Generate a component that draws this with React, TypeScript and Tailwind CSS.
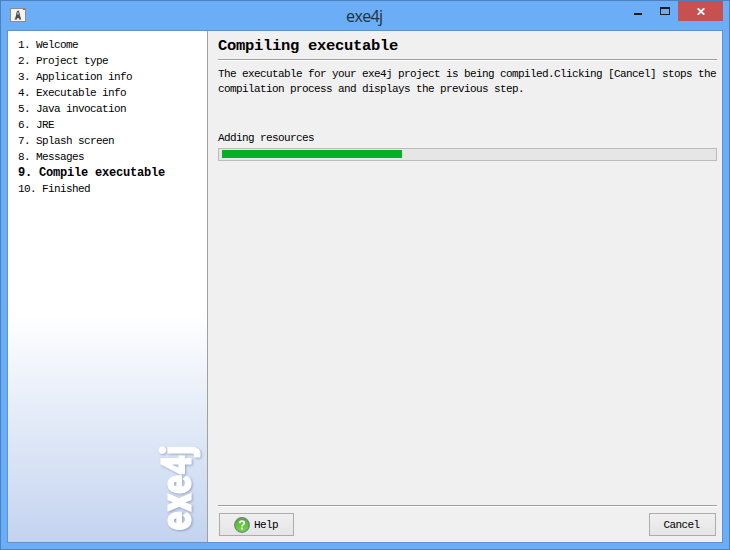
const steps = [
  'Welcome',
  'Project type',
  'Application info',
  'Executable info',
  'Java invocation',
  'JRE',
  'Splash screen',
  'Messages',
  'Compile executable',
  'Finished',
];

const ACTIVE = 8;

function AppIcon() {
  return (
    <svg width="16" height="14" viewBox="0 0 16 14" shapeRendering="crispEdges">
      <rect x="0.5" y="0.5" width="15" height="13" fill="#f4f4f4" stroke="#8b8b8b" />
      <rect x="13" y="1" width="2" height="1" fill="#d0553f" />
      <g shapeRendering="auto">
        <path d="M8 2.2c1.500 1 1.800 3 1.900 5l1.400 4.300H9L8.700 10H7.300L7 11.500H4.700L6.100 7.200c.1-2 .4-4 1.900-5z" fill="#4a4f55" />
        <rect x="7.200" y="4.500" width="1.600" height="2" fill="#b9c6cf" />
        <rect x="4.700" y="10.300" width="1.500" height="1.200" fill="#a4604f" />
      </g>
    </svg>
  );
}

function TitleBar() {
  return (
    <header className="flex h-[29px] shrink-0 justify-between">
      <div className="w-[128px] pt-[7px] pl-[9px]">
        <AppIcon />
      </div>
      <div className="flex-1 pt-[3px] pl-[217px] font-['Open_Sans','Noto_Sans',sans-serif] text-[16px] leading-[24px] text-[#24303d]">
        exe4j
      </div>
      <div className="flex">
        <svg width="52" height="20" viewBox="0 0 52 20" shapeRendering="crispEdges">
          <rect x="8" y="12" width="8" height="2" fill="#1e1e1e" />
          <path d="M34 6h10v8H34z M35 8v5h8V8z" fill="#1e1e1e" fillRule="evenodd" />
        </svg>
        <div className="flex h-5 w-[45px] items-center justify-center bg-[#c75050]">
          <svg width="8" height="7" viewBox="0 0 8 7">
            <path d="M0.700 0.300L7.300 6.700M7.300 0.300L0.700 6.700" stroke="#fff" strokeWidth="1.800" />
          </svg>
        </div>
        <div className="w-[6px]" />
      </div>
    </header>
  );
}

function Logo() {
  return (
    <svg width="60" height="100" viewBox="0 0 60 100" className="mt-auto ml-auto shrink-0 overflow-visible drop-shadow-[1px_1px_1px_rgba(90,110,150,0.5)]">
      <text
        transform="translate(44 88.500) rotate(-90)"
        textLength="85"
        lengthAdjust="spacingAndGlyphs"
        fill="#fff"
        stroke="#fff"
        strokeWidth="1.100"
        className="font-['Roboto',sans-serif] text-[42px] font-black tracking-normal"
      >
        exe4j
      </text>
    </svg>
  );
}

function Sidebar() {
  return (
    <aside className="flex w-[200px] shrink-0 flex-col border-r border-[#a0a0a0] bg-[linear-gradient(to_bottom,#fff_0,#fff_282px,#c3d3ef_512px)] pt-[6px]">
      <ol className="pl-[10px]">
        {steps.map((step, i) => (
          <li
            key={step}
            className={
              i === ACTIVE
                ? 'h-4 text-[12px] leading-4 font-bold tracking-[-0.2px] whitespace-pre'
                : 'h-4 leading-4 whitespace-pre'
            }
          >
            {i + 1}. {step}
          </li>
        ))}
      </ol>
      <Logo />
    </aside>
  );
}

function Rule() {
  return <div className="h-[2px] shrink-0 border-b border-white bg-[#a0a0a0]" />;
}

function HelpIcon() {
  return (
    <svg width="16" height="16" viewBox="0 0 16 16">
      <defs>
        <linearGradient id="help" x1="0" y1="0" x2="0" y2="1">
          <stop offset="0" stopColor="#4fae35" />
          <stop offset="1" stopColor="#6fdc44" />
        </linearGradient>
      </defs>
      <circle cx="8" cy="8" r="7.300" fill="url(#help)" stroke="#72808a" strokeWidth="1.300" />
      <path d="M5.800 6.200C5.800 3.500 10.300 3.600 10.300 6.100 10.300 7.700 8 7.700 8 9.500" fill="none" stroke="#fff" strokeWidth="1.700" />
      <rect x="7.100" y="10.600" width="1.800" height="1.800" fill="#fff" />
    </svg>
  );
}

function Main() {
  return (
    <main className="flex min-w-0 flex-1 flex-col bg-[#f0f0f0] pr-[5px] pl-[10px]">
      <h1 className="h-[28px] pt-[5px] text-[15.500px] leading-[21px] font-bold tracking-[-0.300px] whitespace-nowrap">
        Compiling executable
      </h1>
      <Rule />
      <p className="mt-[6px] text-[11px] leading-[15px] whitespace-nowrap">
        The executable for your exe4j project is being compiled.Clicking [Cancel] stops the
        <br />
        compilation process and displays the previous step.
      </p>
      <div className="mt-[33px] h-[18px] leading-[16px]">Adding resources</div>
      <div className="h-[13px] w-[499px] border border-[#bcbcbc] bg-[#e6e6e6] py-[1px] pl-[3px]">
        <div className="h-2 w-[180px] bg-[#06b025]" />
      </div>
      <div className="flex-1" />
      <Rule />
      <div className="flex h-[35px] shrink-0 items-start justify-between pt-[6px] pr-px pl-px">
        <button className="flex h-[23px] w-[75px] items-center gap-[4px] border border-[#acacac] bg-linear-to-b from-[#f0f0f0] to-[#e5e5e5] pl-[14px]">
          <HelpIcon />
          <span className="pt-px">Help</span>
        </button>
        <button className="h-[23px] w-[67px] border border-[#acacac] bg-linear-to-b from-[#f0f0f0] to-[#e5e5e5] pt-px pr-[2px]">
          Cancel
        </button>
      </div>
    </main>
  );
}

export default function App() {
  return (
    <div className="flex h-[550px] w-[730px] flex-col overflow-hidden border border-[#4c81bf] bg-[#6badf6] font-['Liberation_Mono',monospace] text-[11px] tracking-[-0.600px] text-black">
      <TitleBar />
      <div className="mx-[6px] flex h-[513px] border border-[#5b93d3]">
        <Sidebar />
        <Main />
      </div>
    </div>
  );
}
